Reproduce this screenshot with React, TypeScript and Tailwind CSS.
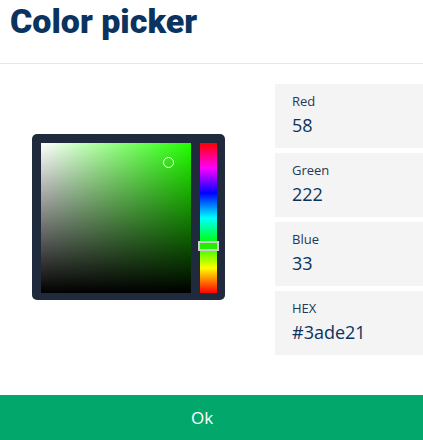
import React from "react";

const fields = [
  { label: "Red", value: "58" },
  { label: "Green", value: "222" },
  { label: "Blue", value: "33" },
  { label: "HEX", value: "#3ade21" },
];

export default function App() {
  return (
    <div className="w-[423px] h-[440px] bg-white flex flex-col overflow-hidden" style={{ fontFamily: "'Open Sans', sans-serif" }}>
      <div className="h-[64px] border-b border-[#e6e6e6] pl-[10px] shrink-0">
        <h1 className="text-[34px] leading-[42px] text-[#0a3360]" style={{ fontFamily: "Roboto, sans-serif", fontWeight: 900 }}>
          Color picker
        </h1>
      </div>
      <div className="flex flex-1">
        <div className="pl-[32px] pt-[70px] w-[275px] shrink-0">
          <div className="w-[193px] h-[166px] bg-[#1f2a3d] rounded-[5px] flex gap-[9px] pl-[9px] pr-[8px] pt-[9px] pb-[7px]">
            <div className="relative w-[150px] h-[150px] bg-[#22ff00]">
              <div className="absolute inset-0 bg-[linear-gradient(to_right,#ffffff,rgba(255,255,255,0))]" />
              <div className="absolute inset-0 bg-[linear-gradient(to_top,#000000,rgba(0,0,0,0))]" />
              <div className="absolute left-[122px] top-[14px] w-[11px] h-[11px] rounded-full border border-white" />
            </div>
            <div className="relative w-[17px] h-[150px] bg-[linear-gradient(to_bottom,#ff0000,#ff00ff,#0000ff,#00ffff,#00ff00,#ffff00,#ff0000)]">
              <div className="absolute left-[-2px] top-[98px] w-[21px] h-[10px] border-2 border-[#cfcfcf] bg-[#22ee00]" />
            </div>
          </div>
        </div>
        <div className="flex-1 flex flex-col gap-[5px] pt-[20px]">
          {fields.map((f) => (
            <div key={f.label} className="h-[64px] bg-[#f4f4f4] pl-[17px] pt-[8px]">
              <div className="text-[13px] leading-[18px] text-[#24395a]">{f.label}</div>
              <div className="text-[18px] leading-[24px] mt-[3px] text-[#0a3360]">{f.value}</div>
            </div>
          ))}
        </div>
      </div>
      <div className="h-[45px] shrink-0 bg-[#02a86b] flex items-center justify-center pr-[19px] text-white text-[17px]">
        Ok
      </div>
    </div>
  );
}
